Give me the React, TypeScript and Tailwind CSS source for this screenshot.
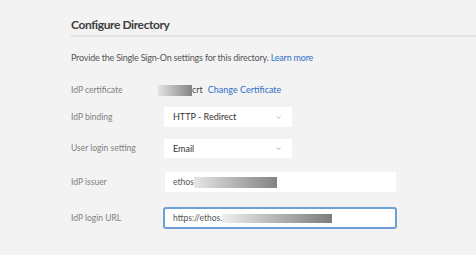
export default function App() {
  const font = { fontFamily: 'Lato, "Open Sans", sans-serif' };
  return (
    <div className="w-[476px] h-[255px] bg-[#f3f3f3] overflow-hidden" style={font}>
      <div className="pl-[71px] pt-[16px]">
        <h1 className="text-[12px] font-bold text-[#3d3d3d] leading-[18px] tracking-[-0.4px]">Configure Directory</h1>
        <div className="mt-[1px] h-[2px] bg-[#e2e2e2]" />
        <p className="mt-[14px] text-[9px] text-[#555] leading-[14px] tracking-[-0.2px]">
          Provide the Single Sign-On settings for this directory. <span className="text-[#2f6fc7]">Learn more</span>
        </p>

        <div className="mt-[18px] flex items-center h-[14px]">
          <span className="w-[87px] text-[8.5px] text-[#808080]">IdP certificate</span>
          <span className="w-[34px] h-[11px] bg-gradient-to-r from-[#e4e4e4] to-[#858585]" />
          <span className="text-[9px] text-[#444]">crt</span>
          <span className="ml-[5px] text-[9px] text-[#2f6fc7]">Change Certificate</span>
        </div>

        <div className="mt-[10px] flex items-center">
          <span className="w-[93px] text-[8.5px] text-[#808080]">IdP binding</span>
          <div className="w-[128px] h-[20px] bg-white flex items-center justify-between pl-[9px] pr-[11px]">
            <span className="text-[9px] text-[#333]">HTTP - Redirect</span>
            <svg width="5" height="3" viewBox="0 0 5 3"><path d="M0.5 0.5l2 2 2-2" fill="none" stroke="#aaa" strokeWidth="0.9" /></svg>
          </div>
        </div>

        <div className="mt-[12px] flex items-center">
          <span className="w-[93px] text-[8.5px] text-[#808080]">User login setting</span>
          <div className="w-[128px] h-[19px] bg-white flex items-center justify-between pl-[9px] pr-[11px]">
            <span className="text-[9px] text-[#333]">Email</span>
            <svg width="5" height="3" viewBox="0 0 5 3"><path d="M0.5 0.5l2 2 2-2" fill="none" stroke="#aaa" strokeWidth="0.9" /></svg>
          </div>
        </div>

        <div className="mt-[14px] flex items-center">
          <span className="w-[94px] text-[8.5px] text-[#808080]">IdP issuer</span>
          <div className="w-[231px] h-[20px] bg-white flex items-center pl-[8px]">
            <span className="text-[8.5px] text-[#555]">ethos</span>
            <span className="w-[83px] h-[11px] bg-gradient-to-r from-[#e6e6e6] to-[#838383]" />
          </div>
        </div>

        <div className="mt-[15px] flex items-center">
          <span className="w-[92px] text-[8.5px] text-[#808080]">IdP login URL</span>
          <div className="w-[234px] h-[22px] bg-white border-2 border-[#6f9fd6] rounded-[3px] flex items-center pl-[8px]">
            <span className="text-[8.5px] text-[#555]">https://ethos.</span>
            <span className="w-[110px] h-[9px] bg-gradient-to-r from-[#eeeeee] to-[#7d7d7d]" />
          </div>
        </div>
      </div>
    </div>
  );
}
